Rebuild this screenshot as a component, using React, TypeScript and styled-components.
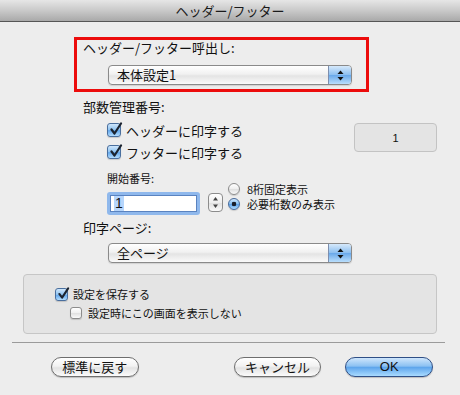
import React from "react";
import styled, { createGlobalStyle } from "styled-components";

const Global = createGlobalStyle`
  html, body { margin: 0; padding: 0; background: #ededed; }
  body { font-family: "Noto Sans CJK JP", "Liberation Sans", sans-serif; color: #111; }
`;

const Dialog = styled.div`
  width: 460px;
  height: 395px;
  background: #ededed;
  display: flex;
  flex-direction: column;
  overflow: hidden;
`;

const TitleBar = styled.div`
  height: 21px;
  border-bottom: 1px solid #565656;
  background: linear-gradient(#e6e6e6, #c9c9c9 50%, #a9a9a9);
  display: flex;
  align-items: center;
  justify-content: center;
  font-size: 13px;
  line-height: 21px;
  color: #1a1a1a;
`;

const RedBox = styled.div`
  margin: 15px 0 0 74px;
  width: 283px;
  height: 49px;
  border: 3px solid #ec0c0c;
  padding: 0 0 0 6px;
  display: flex;
  flex-direction: column;
`;

const Label = styled.div<{ $indent?: number; $top?: number }>`
  margin-left: ${(p) => p.$indent ?? 0}px;
  margin-top: ${(p) => p.$top ?? 0}px;
  font-size: 13px;
  line-height: 16px;
  height: 16px;
  white-space: nowrap;
`;

const SmallLabel = styled.div<{ $top?: number }>`
  margin-top: ${(p) => p.$top ?? 0}px;
  font-size: 11px;
  line-height: 12px;
  height: 12px;
  white-space: nowrap;
`;

const PopupBox = styled.div<{ $indent: number; $top: number }>`
  margin-left: ${(p) => p.$indent}px;
  margin-top: ${(p) => p.$top}px;
  width: 244px;
  height: 20px;
  box-sizing: border-box;
  border: 1px solid #8a8a8a;
  border-radius: 4px;
  background: linear-gradient(#ffffff, #f1f1f1 45%, #e4e4e4 55%, #fafafa);
  display: flex;
  align-items: stretch;
  box-shadow: 0 1px 1px rgba(0, 0, 0, 0.12);
`;

const PopupText = styled.div`
  flex: 1;
  padding-left: 8px;
  font-size: 13px;
  line-height: 18px;
`;

const PopupArrows = styled.div`
  width: 22px;
  border-left: 1px solid #7c8eae;
  border-radius: 0 3px 3px 0;
  background: linear-gradient(#d6e9fb, #8ec0f0 48%, #6aa9ea 52%, #b9defc);
  display: flex;
  align-items: center;
  justify-content: center;
`;

const Popup = ({ text, indent, top }: { text: string; indent: number; top: number }) => (
  <PopupBox $indent={indent} $top={top}>
    <PopupText>{text}</PopupText>
    <PopupArrows>
      <svg width="7" height="11" viewBox="0 0 7 11">
        <path d="M3.5 0.5 L6.5 4 L0.5 4 Z" fill="#111" />
        <path d="M0.5 7 L6.5 7 L3.5 10.5 Z" fill="#111" />
      </svg>
    </PopupArrows>
  </PopupBox>
);

const CheckRow = styled.div<{ $indent: number; $height: number; $gap: number; $size: number }>`
  margin-left: ${(p) => p.$indent}px;
  height: ${(p) => p.$height}px;
  display: flex;
  align-items: center;
  gap: ${(p) => p.$gap}px;
  font-size: ${(p) => p.$size}px;
  white-space: nowrap;
`;

const Box = styled.span<{ $on: boolean; $s: number }>`
  position: relative;
  width: ${(p) => p.$s}px;
  height: ${(p) => p.$s}px;
  box-sizing: border-box;
  border-radius: 3px;
  border: 1px solid ${(p) => (p.$on ? "#4a6f9e" : "#8c8c8c")};
  background: ${(p) =>
    p.$on
      ? "linear-gradient(#cfe6fb, #8ec3f1 50%, #63a7ec 55%, #b2dcfd)"
      : "linear-gradient(#ffffff, #f0f0f0 50%, #e2e2e2 55%, #fafafa)"};
  box-shadow: 0 1px 1px rgba(0, 0, 0, 0.15);
  flex: none;
  svg {
    position: absolute;
    left: 1px;
    top: -2px;
  }
`;

const Check = ({ on, s }: { on: boolean; s: number }) => (
  <Box $on={on} $s={s}>
    {on && (
      <svg width={s} height={s} viewBox="0 0 14 14">
        <path d="M2.5 7.5 L5.5 11.5 L12 1.5" stroke="#1c2430" strokeWidth="2.2" fill="none" strokeLinecap="round" strokeLinejoin="round" />
      </svg>
    )}
  </Box>
);

const CopyRow = styled.div`
  display: flex;
  align-items: flex-start;
  justify-content: space-between;
  padding-right: 23px;
  margin-top: 4px;
`;

const CopyLeft = styled.div`
  display: flex;
  flex-direction: column;
`;

const ValueField = styled.div`
  margin-top: 4px;
  width: 83px;
  height: 29px;
  box-sizing: border-box;
  border: 1px solid #c3c3c3;
  border-radius: 4px;
  background: #e4e4e4;
  display: flex;
  align-items: center;
  justify-content: center;
  font-family: "Liberation Sans", sans-serif;
  font-size: 11px;
`;

const StartRow = styled.div`
  margin: 9px 0 0 107px;
  display: flex;
  align-items: flex-start;
`;

const StartCol = styled.div`
  display: flex;
  flex-direction: column;
`;

const InputRing = styled.div`
  margin-top: 8px;
  width: 93px;
  height: 23px;
  box-sizing: border-box;
  border-radius: 3px;
  background: #8fb8ec;
  padding: 3px;
`;

const InputInner = styled.div`
  height: 100%;
  box-sizing: border-box;
  background: #fff;
  border: 1px solid #5a83c0;
  display: flex;
  align-items: center;
  padding-left: 3px;
`;

const Selected = styled.span`
  background: #b6d6fc;
  font-family: "Liberation Sans", sans-serif;
  font-size: 14px;
  line-height: 15px;
  padding: 0 1px;
`;

const Stepper = styled.div`
  margin: 21px 0 0 8px;
  width: 15px;
  height: 19px;
  box-sizing: border-box;
  border: 1px solid #8c8c8c;
  border-radius: 4px;
  background: linear-gradient(#ffffff, #eeeeee 50%, #e0e0e0 52%, #fafafa);
  display: flex;
  align-items: center;
  justify-content: center;
`;

const RadioCol = styled.div`
  margin: 11px 0 0 5px;
  display: flex;
  flex-direction: column;
  gap: 3px;
`;

const RadioRow = styled.div`
  height: 12px;
  display: flex;
  align-items: center;
  gap: 7px;
  font-size: 11px;
  white-space: nowrap;
`;

const RadioDot = styled.span<{ $on: boolean }>`
  width: 12px;
  height: 12px;
  box-sizing: border-box;
  border-radius: 50%;
  border: 1px solid ${(p) => (p.$on ? "#46699a" : "#8c8c8c")};
  background: ${(p) =>
    p.$on
      ? "radial-gradient(circle at 50% 50%, #1a1f2a 0 2px, transparent 2.6px), linear-gradient(#cfe6fb, #83bdf0 50%, #5fa4ea 55%, #b2dcfd)"
      : "linear-gradient(#ffffff, #eeeeee 50%, #e0e0e0 55%, #fafafa)"};
  box-shadow: 0 1px 1px rgba(0, 0, 0, 0.15);
  flex: none;
`;

const Group = styled.div`
  margin: 11px 0 0 23px;
  width: 414px;
  height: 60px;
  box-sizing: border-box;
  border: 1px solid #c6c6c6;
  border-radius: 4px;
  background: #e4e4e4;
  padding-top: 12px;
  display: flex;
  flex-direction: column;
  gap: 5px;
`;

const Separator = styled.div`
  margin: 8px 0 0 12px;
  width: 433px;
  height: 1px;
  background: #9b9b9b;
`;

const ButtonRow = styled.div`
  margin: 14px 0 0 51px;
  width: 382px;
  display: flex;
  align-items: center;
`;

const Button = styled.div<{ $primary?: boolean; $ml?: number }>`
  margin-left: ${(p) => p.$ml ?? 0}px;
  width: 88px;
  height: 20px;
  box-sizing: border-box;
  border-radius: 10px;
  border: 1px solid ${(p) => (p.$primary ? "#2f4f86" : "#6e6e6e")};
  background: ${(p) =>
    p.$primary
      ? "linear-gradient(#cfe6fc, #8cc1f2 45%, #5ea5ec 52%, #a9dbff)"
      : "linear-gradient(#ffffff, #f2f2f2 45%, #e3e3e3 55%, #fbfbfb)"};
  box-shadow: 0 1px 1px rgba(0, 0, 0, 0.2);
  display: flex;
  align-items: center;
  justify-content: center;
  font-size: 13px;
  line-height: 18px;
  font-family: ${(p) => (p.$primary ? '"Liberation Sans", sans-serif' : '"Noto Sans CJK JP", sans-serif')};
`;

export default function App() {
  return (
    <>
      <Global />
      <Dialog>
        <TitleBar>ヘッダー/フッター</TitleBar>
        <RedBox>
          <Label $top={0}>ヘッダー/フッター呼出し:</Label>
          <Popup text="本体設定1" indent={25} top={9} />
        </RedBox>

        <Label $indent={83} $top={7}>部数管理番号:</Label>
        <CopyRow>
          <CopyLeft>
            <CheckRow $indent={107} $height={22} $gap={5} $size={13}>
              <Check on s={14} />
              ヘッダーに印字する
            </CheckRow>
            <CheckRow $indent={107} $height={22} $gap={5} $size={13}>
              <Check on s={14} />
              フッターに印字する
            </CheckRow>
          </CopyLeft>
          <ValueField>1</ValueField>
        </CopyRow>

        <StartRow>
          <StartCol>
            <SmallLabel>開始番号:</SmallLabel>
            <InputRing>
              <InputInner>
                <Selected>1</Selected>
              </InputInner>
            </InputRing>
          </StartCol>
          <Stepper>
            <svg width="7" height="13" viewBox="0 0 7 13">
              <path d="M3.5 1 L6 4.5 L1 4.5 Z" fill="#444" />
              <path d="M1 8.5 L6 8.5 L3.5 12 Z" fill="#444" />
            </svg>
          </Stepper>
          <RadioCol>
            <RadioRow>
              <RadioDot $on={false} />
              8桁固定表示
            </RadioRow>
            <RadioRow>
              <RadioDot $on />
              必要桁数のみ表示
            </RadioRow>
          </RadioCol>
        </StartRow>

        <Label $indent={83} $top={5}>印字ページ:</Label>
        <Popup text="全ページ" indent={108} top={7} />

        <Group>
          <CheckRow $indent={31} $height={14} $gap={5} $size={11}>
            <Check on s={13} />
            設定を保存する
          </CheckRow>
          <CheckRow $indent={46} $height={14} $gap={6} $size={11}>
            <Check on={false} s={12} />
            設定時にこの画面を表示しない
          </CheckRow>
        </Group>

        <Separator />
        <ButtonRow>
          <Button>標準に戻す</Button>
          <Button $ml={95}>キャンセル</Button>
          <Button $primary $ml={24}>OK</Button>
        </ButtonRow>
      </Dialog>
    </>
  );
}
